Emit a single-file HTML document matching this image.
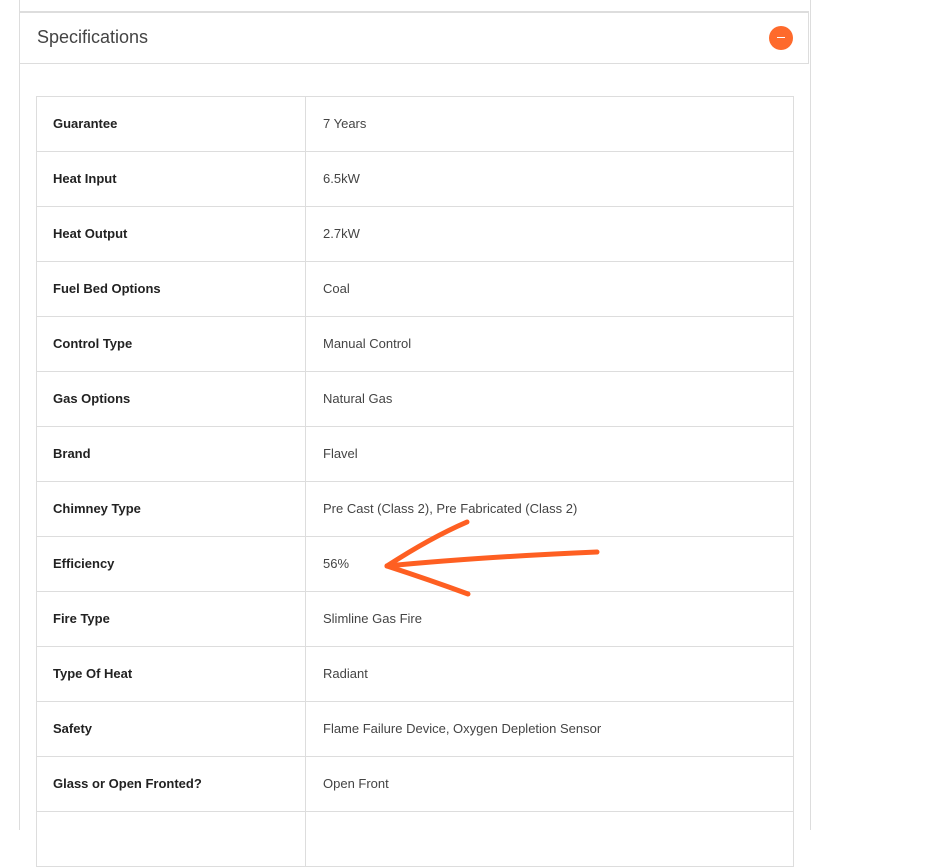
<!DOCTYPE html>
<html><head><style>
body{margin:0;width:933px;height:821px;overflow:hidden;background:#fff;font-family:"Liberation Sans",sans-serif;position:relative}
.outer{position:absolute;left:19px;top:0;width:790px;height:830px;border-left:1px solid #ddd;border-right:1px solid #ddd}
.hdr{position:absolute;left:20px;top:11px;width:788px;height:50px;border-top:2px solid #ddd;border-bottom:1px solid #ddd;border-right:1px solid #ddd}
.hdr span{position:absolute;left:17px;top:14px;font-size:18px;color:#444}
.btn{position:absolute;left:769px;top:26px;width:24px;height:24px;border-radius:50%;background:#fe6a2c}
.btn:after{content:"";position:absolute;left:8px;top:11px;width:8px;height:1px;background:#fff}
table{position:absolute;left:36px;top:96px;border-collapse:collapse;width:758px}
td{border:1px solid #ddd;height:54px;padding:0 0 0 16px;font-size:13px;color:#444;line-height:14px}
td:first-child{width:252px;font-weight:bold;color:#222}
td:last-child{padding-left:17px}
</style></head><body>
<div class="outer"></div>
<div class="hdr"><span>Specifications</span></div>
<div class="btn"></div>
<table>
<tr><td>Guarantee</td><td>7 Years</td></tr>
<tr><td>Heat Input</td><td>6.5kW</td></tr>
<tr><td>Heat Output</td><td>2.7kW</td></tr>
<tr><td>Fuel Bed Options</td><td>Coal</td></tr>
<tr><td>Control Type</td><td>Manual Control</td></tr>
<tr><td>Gas Options</td><td>Natural Gas</td></tr>
<tr><td>Brand</td><td>Flavel</td></tr>
<tr><td>Chimney Type</td><td>Pre Cast (Class 2), Pre Fabricated (Class 2)</td></tr>
<tr><td>Efficiency</td><td>56%</td></tr>
<tr><td>Fire Type</td><td>Slimline Gas Fire</td></tr>
<tr><td>Type Of Heat</td><td>Radiant</td></tr>
<tr><td>Safety</td><td>Flame Failure Device, Oxygen Depletion Sensor</td></tr>
<tr><td>Glass or Open Fronted?</td><td>Open Front</td></tr>
<tr><td></td><td></td></tr>
</table>
<svg style="position:absolute;left:0;top:0" width="933" height="821">
<g stroke="#fe5f22" stroke-width="5" stroke-linecap="round" fill="none">
<path d="M597 552 Q480 557 387 566"/>
<path d="M387 566 Q430 538 467 522"/>
<path d="M387 566 Q430 580 468 594"/>
</g></svg>
</body></html>
